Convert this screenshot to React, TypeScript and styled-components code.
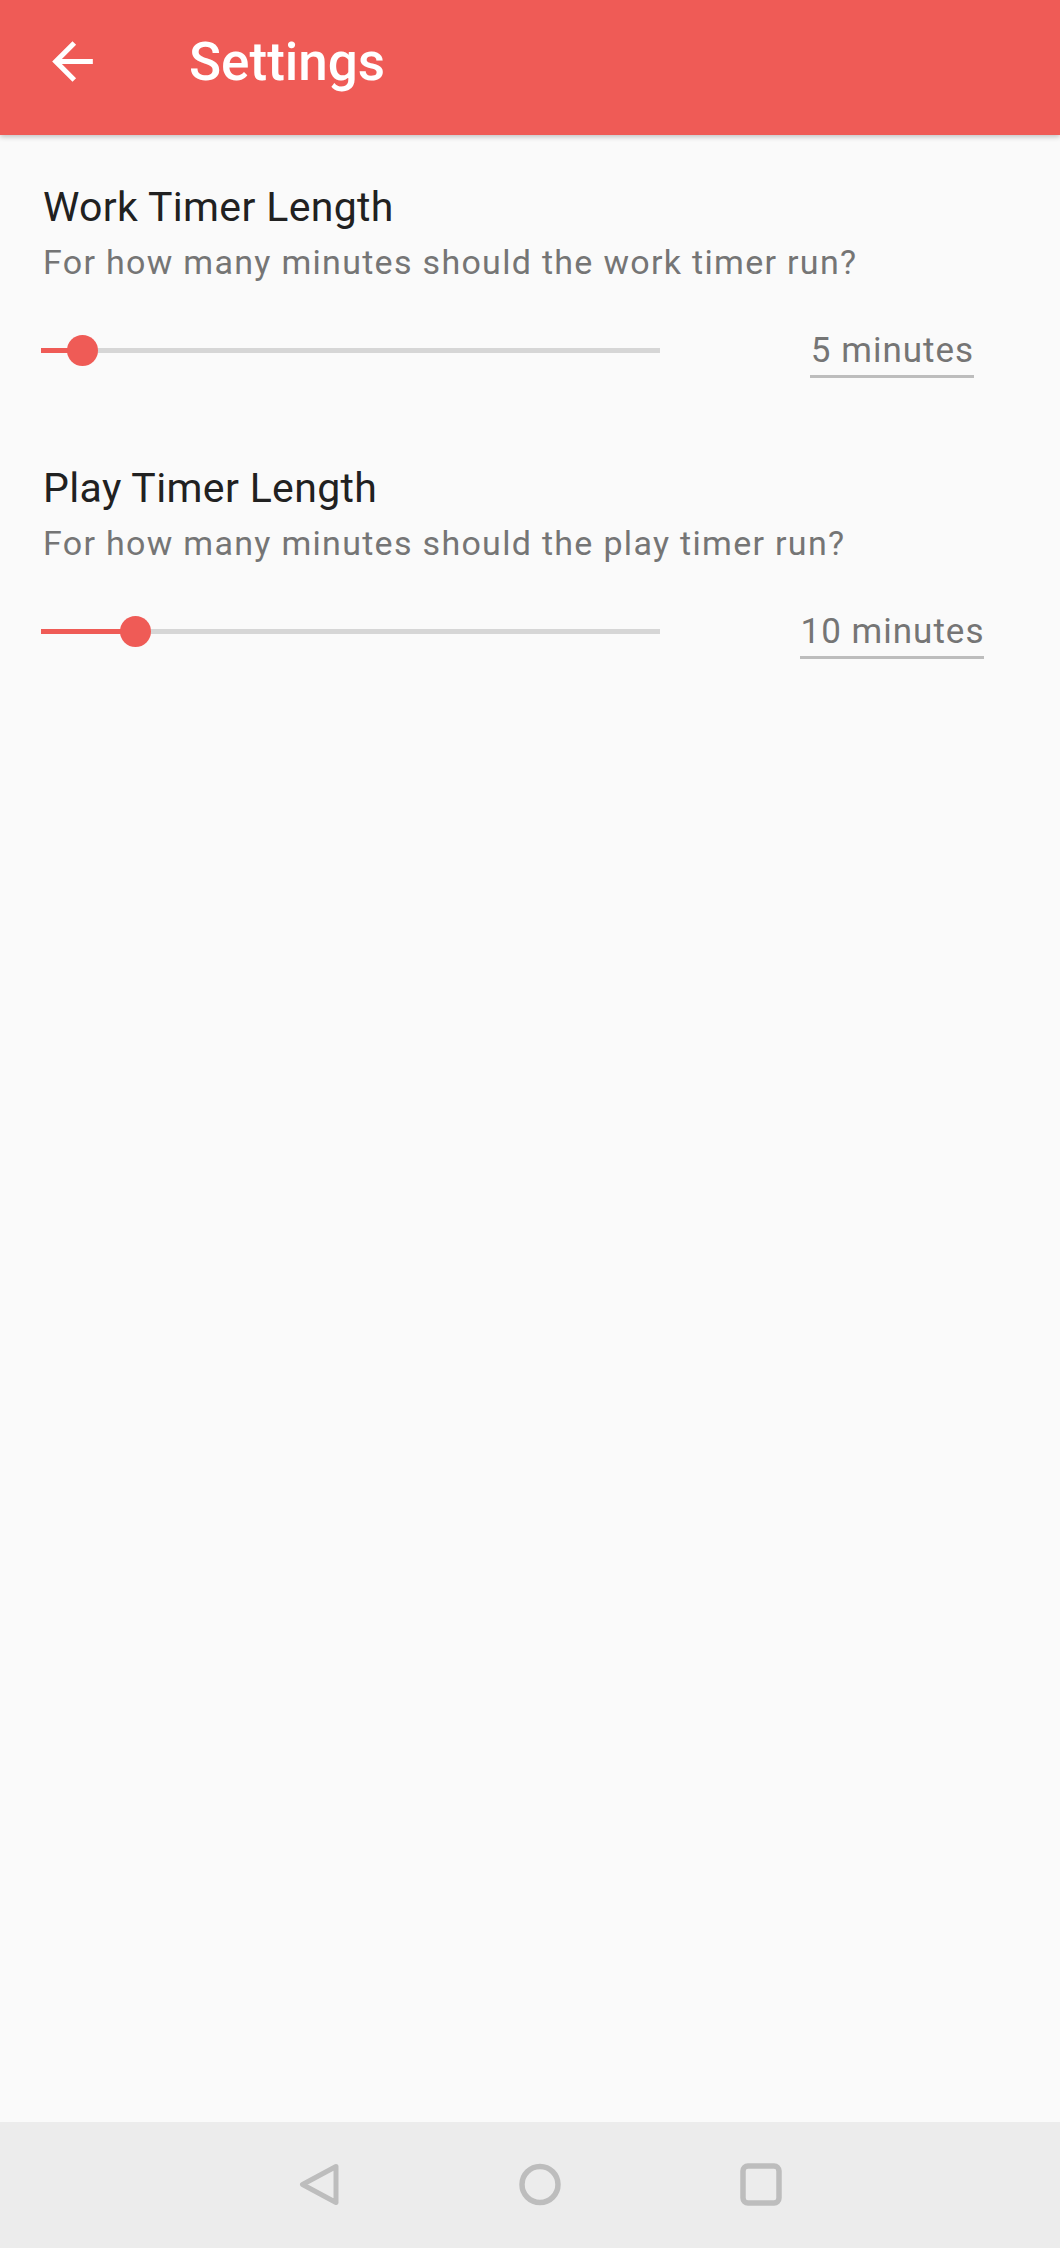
import React from "react";
import styled, { createGlobalStyle } from "styled-components";

const Global = createGlobalStyle`
  html, body { margin: 0; padding: 0; background: #fafafa; }
  body { font-family: Roboto, "Noto Sans", "Liberation Sans", sans-serif; }
  * { box-sizing: border-box; }
`;

const Screen = styled.div`
  min-height: 100vh;
  display: flex;
  flex-direction: column;
  background: #fafafa;
`;

const AppBar = styled.header`
  height: 135px;
  flex: none;
  display: flex;
  align-items: center;
  gap: 86px;
  padding: 0 0 12px 42px;
  background: #ef5b56;
  box-shadow: 0 2px 5px rgba(0, 0, 0, 0.22);
  position: relative;
  z-index: 1;
`;

const BackButton = styled.button`
  width: 61px;
  height: 61px;
  padding: 0;
  border: 0;
  background: transparent;
  display: flex;
  color: #ffffff;
  svg { width: 61px; height: 61px; display: block; }
`;

const Title = styled.h1`
  margin: 0;
  font-family: Roboto, sans-serif;
  font-weight: 500;
  font-size: 53px;
  line-height: 64px;
  color: #ffffff;
`;

const Content = styled.main`
  flex: 1;
  display: flex;
  flex-direction: column;
`;

const Section = styled.section`
  height: 281px;
  padding: 48px 0 0 43px;
  display: flex;
  flex-direction: column;
`;

const SectionTitle = styled.div`
  font-size: 41px;
  line-height: 49px;
  letter-spacing: 0.35px;
  color: #212121;
`;

const SectionHint = styled.div`
  margin-top: 10px;
  font-size: 34px;
  line-height: 40px;
  letter-spacing: 1.3px;
  color: #757575;
`;

const ControlRow = styled.div`
  margin-top: 40px;
  display: flex;
  align-items: center;
  margin-left: -2px;
`;

const Track = styled.div`
  position: relative;
  width: 619px;
  height: 5px;
  background: #d6d6d6;
  flex: none;
`;

const Fill = styled.div`
  height: 100%;
  background: #ef5b56;
`;

const Thumb = styled.div`
  position: absolute;
  top: 50%;
  width: 31px;
  height: 31px;
  margin: -15.5px 0 0 -15.5px;
  border-radius: 50%;
  background: #ef5b56;
`;

const ValueCell = styled.div`
  flex: 1;
  display: flex;
  justify-content: center;
  margin-left: 64px;
  padding-top: 8px;
`;

const ValueText = styled.span`
  font-size: 35px;
  line-height: 42px;
  letter-spacing: 1px;
  color: #757575;
  padding: 0 0 3px 1px;
  border-bottom: 3px solid #bdbdbd;
`;

const NavBar = styled.nav`
  height: 126px;
  flex: none;
  background: #ececec;
  display: flex;
  align-items: center;
  gap: 179px;
  padding-left: 298px;
  padding-bottom: 2px;
  svg { width: 42px; height: 43px; display: block; }
`;

const MIN = 1;
const MAX = 60;

function SliderSetting({ title, hint, value }: { title: string; hint: string; value: number }) {
  const pct = ((value - MIN) / (MAX - MIN)) * 100;
  return (
    <Section>
      <SectionTitle>{title}</SectionTitle>
      <SectionHint>{hint}</SectionHint>
      <ControlRow>
        <Track>
          <Fill style={{ width: `${pct}%` }} />
          <Thumb style={{ left: `${pct}%` }} />
        </Track>
        <ValueCell>
          <ValueText>{value} minutes</ValueText>
        </ValueCell>
      </ControlRow>
    </Section>
  );
}

export default function App() {
  return (
    <Screen>
      <Global />
      <AppBar>
        <BackButton aria-label="Back">
          <svg viewBox="0 0 24 24" fill="currentColor">
            <path d="M20 11H7.83l5.59-5.59L12 4l-8 8 8 8 1.41-1.41L7.83 13H20v-2z" />
          </svg>
        </BackButton>
        <Title>Settings</Title>
      </AppBar>
      <Content>
        <SliderSetting
          title="Work Timer Length"
          hint="For how many minutes should the work timer run?"
          value={5}
        />
        <SliderSetting
          title="Play Timer Length"
          hint="For how many minutes should the play timer run?"
          value={10}
        />
      </Content>
      <NavBar>
        <svg viewBox="0 0 42 43" fill="none" stroke="#bdbdbd" strokeWidth="5" strokeLinejoin="round">
          <path d="M38 3.5 L4.5 21.5 L38 39.5 Z" />
        </svg>
        <svg viewBox="0 0 42 43" fill="none" stroke="#bdbdbd" strokeWidth="5.5">
          <circle cx="21" cy="21.5" r="18" />
        </svg>
        <svg viewBox="0 0 42 43" fill="none" stroke="#bdbdbd" strokeWidth="5.5">
          <rect x="3" y="3" width="36" height="37" rx="5" />
        </svg>
      </NavBar>
    </Screen>
  );
}
